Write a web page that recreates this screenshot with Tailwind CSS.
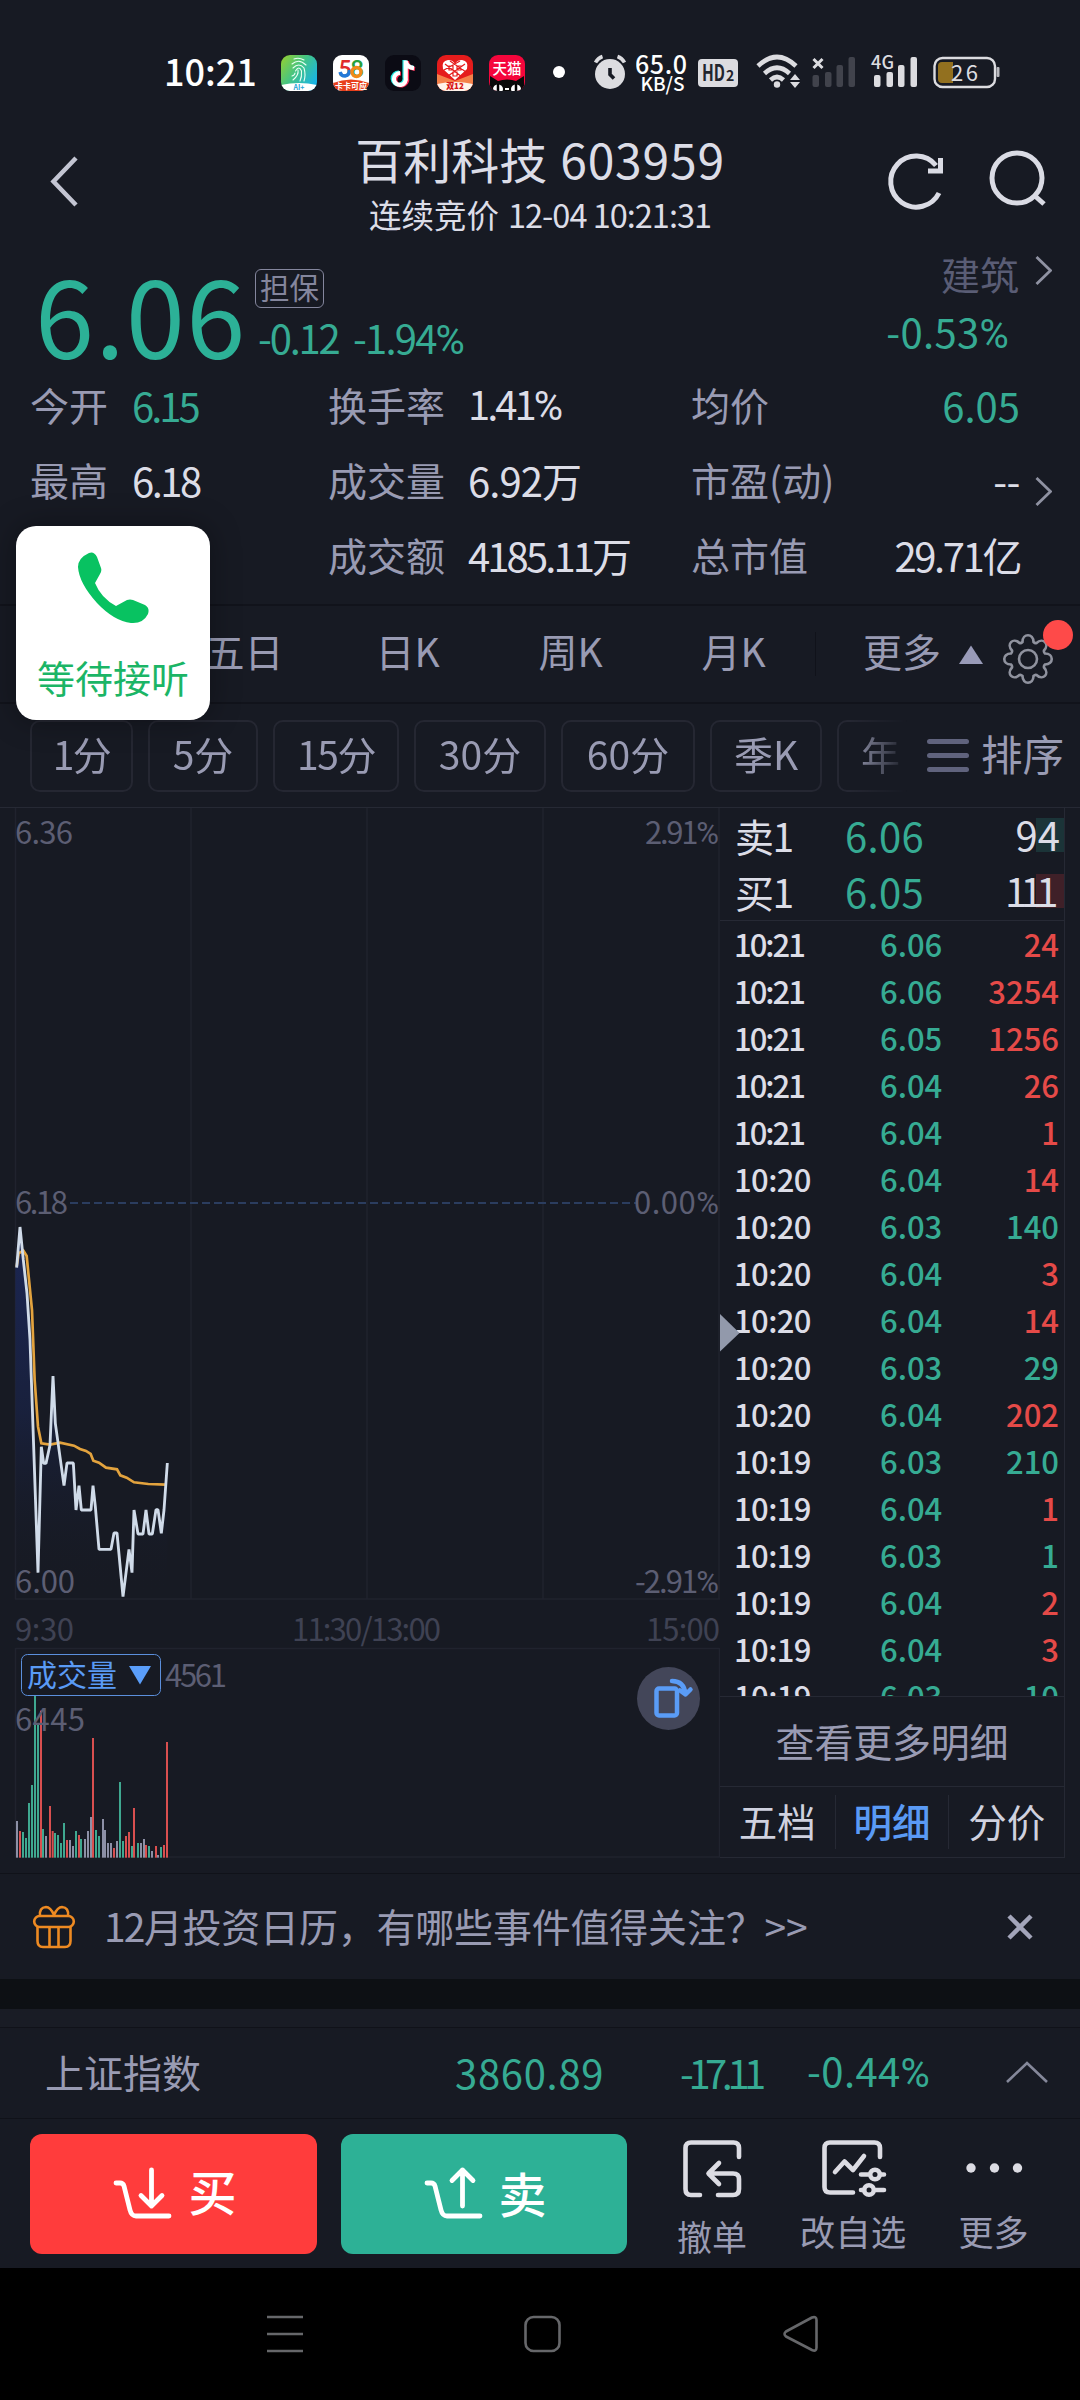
<!DOCTYPE html>
<html lang="zh-CN">
<head>
<meta charset="utf-8">
<title>百利科技 603959</title>
<script src="https://cdn.jsdelivr.net/npm/@tailwindcss/browser@4"></script>
</head>
<body class="bg-black">
<div class="relative flex h-[2400px] w-[1080px] flex-col overflow-hidden bg-[#171a23] font-['Noto_Sans_CJK_SC',sans-serif] leading-none text-[#dcdde7] whitespace-nowrap">

  <!-- status bar -->
  <div class="flex h-[136px] shrink-0 items-start pl-[164px] pt-[52px] text-white">
    <div class="w-[117px] text-[36px] font-medium leading-[36px]">10:21</div>
    <div class="flex gap-4 pt-[3px]">
      <svg class="size-9" viewBox="0 0 36 36">
        <defs><linearGradient id="fp" x1="0" y1="0" x2="1" y2="0.7"><stop offset="0" stop-color="#9ad02c"/><stop offset=".5" stop-color="#43c486"/><stop offset="1" stop-color="#18b4e6"/></linearGradient>
        <clipPath id="r36"><rect width="36" height="36" rx="9"/></clipPath></defs>
        <g clip-path="url(#r36)"><rect width="36" height="36" fill="url(#fp)"/><path d="M0 30Q18 26 36 30V36H0Z" fill="#fff"/></g>
        <g fill="none" stroke="#eafff4" stroke-width="1.1" stroke-linecap="round"><path d="M13 4Q18 2 23 5M11 9Q18 3 25 10M12 13Q18 7 23 13Q25 20 23 26M14.500 16Q18 10 20.500 16Q21 22 19 26M17 15Q18 20 12 25M14 18Q14 20 11 21"/></g>
        <text x="18" y="35" text-anchor="middle" font-size="7" font-weight="700" fill="#26a4d8">AI+</text>
      </svg>
      <svg class="size-9" viewBox="0 0 36 36">
        <g clip-path="url(#r36)"><rect width="36" height="36" fill="#fff"/><path d="M0 28Q18 21 36 28V36H0Z" fill="#e8401c"/></g>
        <g font-size="23" font-weight="700" font-family="Lato"><text x="5.500" y="22" fill="#e02b2b">5</text><text x="17.500" y="22" fill="#28a03c">8</text></g>
        <path d="M7 17Q8 21 12 21Q17 20 16 15" fill="none" stroke="#2178d8" stroke-width="3.4"/><circle cx="23.500" cy="17" r="4.500" fill="none" stroke="#f28a1a" stroke-width="3.400"/>
        <text x="18" y="33.500" text-anchor="middle" font-size="8" font-weight="700" fill="#fff">卡卡可应</text>
      </svg>
      <svg class="size-9" viewBox="0 0 36 36">
        <rect width="36" height="36" rx="9" fill="#0b0b14"/>
        <g fill="none" stroke-width="4.200"><path d="M19.500 5V22A6 6 0 1 1 14 17.500M19.500 6Q21 12 28 12.500" stroke="#25e8e2"/><path d="M22 6V23A6 6 0 1 1 16 18.500M22 7Q23 13 30 14" stroke="#fb2c55"/><path d="M20.700 5.500V22.500A6 6 0 1 1 15 18M20.700 6.500Q22 12.500 29 13.200" stroke="#fff"/></g>
      </svg>
      <svg class="size-9" viewBox="0 0 36 36">
        <g clip-path="url(#r36)"><rect width="36" height="36" fill="#e51c1c"/><path d="M0 19L18 26L36 19V36H0Z" fill="#f5814a"/><path d="M0 29Q18 25 36 29V36H0Z" fill="#fff3ea"/></g>
        <path d="M18 25L6 14Q4 6 11 5Q16 5 18 9Q20 5 25 5Q32 6 30 14Z" fill="#fff"/>
        <path d="M8 9L25 22M13 6L29 17M28 9L11 21M23 6L7 15M12 11h4v4h-4zM20 11h4v4h-4zM16 17h4v4h-4z" stroke="#e51c1c" stroke-width="1.200" fill="none"/>
        <text x="18" y="34" text-anchor="middle" font-size="8" font-weight="900" fill="#d81414">双12</text>
      </svg>
      <svg class="size-9" viewBox="0 0 36 36">
        <g clip-path="url(#r36)"><rect width="36" height="36" fill="#f5063c"/><path d="M1 36V21L9 26Q18 23 27 26L35 21V36Z" fill="#0a0a0a"/><ellipse cx="9" cy="34" rx="5" ry="4.500" fill="#fff"/><ellipse cx="27" cy="34" rx="5" ry="4.500" fill="#fff"/><path d="M9 29v7M27 29v7" stroke="#000" stroke-width="2.500"/><rect x="16" y="33" width="4" height="2" fill="#fff"/></g>
        <text x="18" y="19" text-anchor="middle" font-size="14.500" font-weight="500" fill="#fff">天猫</text>
      </svg>
    </div>
    <svg class="h-[60px] w-[111px] -mt-[12px]" viewBox="525 40 111 60">
      <circle cx="559" cy="72" r="6" fill="#fff"/>
      <circle cx="610" cy="74" r="15" fill="#dcdce0"/>
      <path d="M610 68v6.500l4 4" fill="none" stroke="#171a23" stroke-width="3.600"/>
      <path d="M595.500 62.500Q598 58 602.500 56.500M617.500 56.500Q622 58 624.500 62.500" fill="none" stroke="#dcdce0" stroke-width="3.600"/>
    </svg>
    <svg class="h-[60px] w-[62px] -mt-[12px]" viewBox="636 40 62 60">
      <g fill="#fff" font-weight="500"><text x="635" y="74" font-size="25" textLength="52">65.0</text><text x="640.500" y="90.500" font-size="19" textLength="44">KB/S</text></g>
    </svg>
    <svg class="h-[60px] w-[302px] -mt-[12px]" viewBox="698 40 302 60">
      <rect x="698" y="59" width="40" height="28" rx="4" fill="#dcdce0"/>
      <text x="702" y="81" font-size="22" font-weight="700" fill="#22252d" textLength="23" lengthAdjust="spacingAndGlyphs">HD</text><text x="726" y="81" font-size="14" font-weight="700" fill="#22252d">2</text>
      <g fill="none" stroke="#dcdce0" stroke-width="4.600"><path d="M758 66Q777 48 796 66"/><path d="M764.500 73.500Q777 62 789.500 73.500"/><path d="M770.500 80Q777 74 783.500 80"/></g>
      <circle cx="777" cy="84.500" r="3.200" fill="#dcdce0"/>
      <path d="M790 80l5-6 5 6zM790 82l5 6 5-6z" fill="#dcdce0"/>
      <path d="M813.500 59l9 9M822.500 59l-9 9" stroke="#dcdce0" stroke-width="3"/>
      <g fill="#41434c"><rect x="812.500" y="75" width="6.500" height="12" rx="2"/><rect x="825" y="72" width="6.500" height="15" rx="2"/><rect x="836.500" y="65" width="6.500" height="22" rx="2"/><rect x="848.500" y="57" width="6.500" height="30" rx="2"/></g>
      <text x="871" y="69" font-size="18" font-weight="500" fill="#dcdce0" textLength="23">4G</text>
      <g fill="#dcdce0"><rect x="874" y="75" width="6.500" height="12" rx="2"/><rect x="886.500" y="72" width="6.500" height="15" rx="2"/><rect x="898" y="65" width="6.500" height="22" rx="2"/><rect x="910.500" y="57" width="6.500" height="30" rx="2"/></g>
      <rect x="934.500" y="58" width="60.500" height="29" rx="8" fill="none" stroke="#dcdce0" stroke-width="2.400"/>
      <path d="M953 62V83H942Q938 83 938 79V66Q938 62 942 62Z" fill="#92701f"/>
      <rect x="996.500" y="67" width="3" height="10" rx="1" fill="#b9b9be"/>
      <text x="951" y="80.500" font-size="22" fill="#dcdce0" textLength="27">26</text>
    </svg>
  </div>

  <!-- header -->
  <div class="flex h-[114px] shrink-0 justify-between">
    <svg class="h-[114px] w-[230px]" viewBox="0 136 230 114"><path d="M76 158L53.500 181.500L76 205" fill="none" stroke="#c3c5d2" stroke-width="4.500"/></svg>
    <div class="flex flex-col items-center">
      <div class="-mt-[2px] text-[48px] leading-[48px]">百利科技<span class="ml-[13px] tracking-[0.800px]">603959</span></div>
      <div class="mt-[15px] text-[32.500px] leading-[33px]">连续竞价<span class="ml-[9px] tracking-[-1px]">12-04 10:21:31</span></div>
    </div>
    <svg class="h-[114px] w-[230px]" viewBox="850 136 230 114">
      <g fill="none" stroke="#dadbe4" stroke-width="5"><path d="M939 193A25.500 25.500 0 1 1 936 165.500"/><path d="M940.500 158V171H928"/><circle cx="1017" cy="178" r="25"/><path d="M1035 196L1044 204"/></g>
    </svg>
  </div>

  <!-- price -->
  <div class="flex h-[120px] shrink-0">
    <div class="mt-[11px] ml-[35px] w-[220px] text-[106px] leading-[105px] tracking-[1.400px] text-[#2cb197]">6.06</div>
    <div class="mt-[19px] flex flex-col items-start">
      <div class="flex h-[39px] w-[69px] items-center justify-center rounded-[6px] border border-[#84869d] pb-[3px] text-[29.500px] text-[#84869d]">担保</div>
      <div class="mt-[9px] ml-[3px] flex text-[40px] leading-[40px] text-[#36ab93]"><span class="w-[95px] tracking-[-2.200px]">-0.12</span><span class="tracking-[-1.800px]">-1.94<span class="font-['Roboto']">%</span></span></div>
    </div>
    <div class="ml-auto mr-[28px] flex flex-col items-end">
      <div class="flex items-start pt-[4px] text-[39px] leading-[39px] text-[#5a5d75]">建筑<svg class="ml-[16px] mt-[2px] h-[29px] w-[17px]" viewBox="0 0 17 29"><path d="M1.500 1L15.500 14.500L1.500 28" fill="none" stroke="#8f92a2" stroke-width="2.800"/></svg></div>
      <div class="mr-[43px] mt-[19px] text-[40px] leading-[39px] tracking-[0.300px] text-[#36ab93]">-0.53<span class="font-['Roboto']">%</span></div>
    </div>
  </div>

  <!-- stats -->
  <div class="flex h-[236px] shrink-0 border-b-2 border-[#11131b] text-[39px]">
    <div class="-mt-[3px] grid w-[328px] grid-cols-[102px_1fr] auto-rows-[75px] items-center pl-[30px] text-[#999bb3]">
      <span>今开</span><span class="text-[40px] tracking-[-3px] text-[#36ab93]">6.15</span>
      <span>最高</span><span class="text-[40px] tracking-[-2.500px] text-[#dcdde7]">6.18</span>
    </div>
    <div class="-mt-[3px] grid w-[363px] grid-cols-[140px_1fr] auto-rows-[75px] items-center text-[#999bb3]">
      <span>换手率</span><span class="text-[40px] tracking-[-3px] text-[#dcdde7]">1.41<span class="font-['Roboto']">%</span></span>
      <span>成交量</span><span class="text-[40px] tracking-[-0.900px] text-[#dcdde7]">6.92万</span>
      <span>成交额</span><span class="text-[40px] tracking-[-2.900px] text-[#dcdde7]">4185.11万</span>
    </div>
    <div class="-mt-[3px] grid w-[329px] grid-cols-[160px_1fr] auto-rows-[75px] items-center text-[#999bb3]">
      <span>均价</span><span class="text-right text-[40px] text-[#36ab93]">6.05</span>
      <span>市盈(动)</span><span class="text-right text-[40px] tracking-[-0.500px] text-[#dcdde7]">--</span>
      <span>总市值</span><span class="text-right text-[40px] tracking-[-2.400px] text-[#dcdde7]">29.71亿</span>
    </div>
    <svg class="ml-[15px] mt-[107px] h-[29px] w-[17px]" viewBox="0 0 17 29"><path d="M1.500 1L15.500 14.500L1.500 28" fill="none" stroke="#8f92a2" stroke-width="2.800"/></svg>
  </div>

  <!-- period tabs -->
  <div class="flex h-[98px] shrink-0 items-center border-b-2 border-[#11131b] text-[39px] text-[#999bb3]">
    <div class="grid w-[815px] grid-cols-5 pb-[8px] text-center"><span></span><span>五日</span><span>日K</span><span>周K</span><span>月K</span></div>
    <div class="h-[44px] w-px bg-[#10121a]"></div>
    <div class="ml-[47px] pb-[8px]">更多</div>
    <svg class="h-[96px] w-[139px]" viewBox="941 606 139 96">
      <path d="M959 664L971 645.500L983 664Z" fill="#999bb8"/>
      <g fill="none" stroke="#8f929e" stroke-width="2.600" transform="translate(1028 659)"><circle r="9"/>
      <path d="M-5.500 -17C-5.500 -26 5.500 -26 5.500 -17Q7 -15.500 8.500 -16C15 -22 22 -15 16 -8.500Q15.500 -7 17 -5.500C26 -5.500 26 5.500 17 5.500Q15.500 7 16 8.500C22 15 15 22 8.500 16Q7 15.500 5.500 17C5.500 26 -5.500 26 -5.500 17Q-7 15.500 -8.500 16C-15 22 -22 15 -16 8.500Q-15.500 7 -17 5.500C-26 5.500 -26 -5.500 -17 -5.500Q-15.500 -7 -16 -8.500C-22 -15 -15 -22 -8.500 -16Q-7 -15.500 -5.500 -17Z"/></g>
      <circle cx="1058" cy="635" r="15" fill="#fe4a49"/>
    </svg>
  </div>

  <!-- minute chips -->
  <div class="flex h-[104px] shrink-0 items-center border-b border-[#262934] pl-[30px] text-[39px] text-[#999bb3]">
    <div class="flex w-[877px] gap-[15px] overflow-hidden [mask-image:linear-gradient(to_right,black_93.500%,transparent_100%)]">
      <div class="flex h-[72px] w-[103px] shrink-0 items-center justify-center rounded-[10px] border-2 border-[#252732] pb-[4px] tracking-[-1.500px]">1分</div>
      <div class="flex h-[72px] w-[110px] shrink-0 items-center justify-center rounded-[10px] border-2 border-[#252732] pb-[4px]">5分</div>
      <div class="flex h-[72px] w-[126px] shrink-0 items-center justify-center rounded-[10px] border-2 border-[#252732] pb-[4px] tracking-[-1.500px]">15分</div>
      <div class="flex h-[72px] w-[132px] shrink-0 items-center justify-center rounded-[10px] border-2 border-[#252732] pb-[4px]">30分</div>
      <div class="flex h-[72px] w-[134px] shrink-0 items-center justify-center rounded-[10px] border-2 border-[#252732] pb-[4px]">60分</div>
      <div class="flex h-[72px] w-[112px] shrink-0 items-center justify-center rounded-[10px] border-2 border-[#252732] pb-[4px]">季K</div>
      <div class="flex h-[72px] w-[112px] shrink-0 items-center rounded-[10px] border-2 border-[#252732] pb-[4px] pl-[22px]">年</div>
    </div>
    <div class="ml-[20px] flex h-[33px] w-[42px] flex-col justify-between">
      <div class="h-[5px] rounded-full bg-[#60637d]"></div><div class="h-[5px] rounded-full bg-[#60637d]"></div><div class="h-[5px] rounded-full bg-[#60637d]"></div>
    </div>
    <div class="ml-[12px] pb-[3px] text-[41.500px]">排序</div>
  </div>

  <!-- chart and trades -->
  <div class="flex h-[1050px] shrink-0">
    <svg class="h-[1050px] w-[720px] shrink-0" viewBox="0 808 720 1050">
      <defs><linearGradient id="area" gradientUnits="userSpaceOnUse" x1="0" y1="80" x2="0" y2="1190"><stop offset="0" stop-color="#1b2654"/><stop offset=".5" stop-color="#19213f" stop-opacity=".9"/><stop offset="1" stop-color="#171a23" stop-opacity="0"/></linearGradient></defs>
      <g fill="none" stroke="#20232e" stroke-width="1.500"><path d="M15.500 808V1599M191 808V1599M367 808V1599M543 808V1599M719 808V1599M15 1599H720M15.500 1648.500H719.500M15.500 1648V1857H719.500V1648"/></g>
      <path d="M70 1203H636" stroke="#2b3d5f" stroke-width="2" stroke-dasharray="8 4"/>
      <g transform="translate(0 1200) scale(.33333)" fill="none">
        <path d="M50 203L60 81L70 180L81 280L90 420L114 1118L124 740L131 790L138 790L150 735L159 528L166 670L192 857L201 789L220 789L228 930L237 857L244 930L273 930L279 857L286 920L297 1048L333 1048L342 999L351 999L369 1190L387 1048L396 1118L402 930L414 1002L429 1002L438 930L447 1002L457 1002L468 929L474 929L484 1000L492 930L502 789V1190H46V203Z" fill="url(#area)"/>
        <path d="M50 200L56 160L70 152L80 168L96 330L104 540L114 680L124 730L150 734L180 728L222 737L240 747L258 753L272 762L280 782L297 788L318 803L351 808L361 826L380 833L402 847L445 852L497 854" stroke="#e3a33e" stroke-width="8"/>
        <path d="M50 203L60 81L70 180L81 280L90 420L114 1118L124 740L131 790L138 790L150 735L159 528L166 670L192 857L201 789L220 789L228 930L237 857L244 930L273 930L279 857L286 920L297 1048L333 1048L342 999L351 999L369 1190L387 1048L396 1118L402 930L414 1002L429 1002L438 930L447 1002L457 1002L468 929L474 929L484 1000L492 930L502 789" stroke="#d0dbe9" stroke-width="8.500" stroke-linejoin="bevel"/>
      </g>
      <g id="bars"></g>
      <g font-size="31" fill="#5c5e73">
        <text x="15" y="844" textLength="58">6.36</text><text x="645" y="844" textLength="74">2.91<tspan font-family="Roboto">%</tspan></text>
        <text x="15" y="1214" textLength="53">6.18</text><text x="634" y="1214" textLength="85">0.00<tspan font-family="Roboto">%</tspan></text>
        <text x="15" y="1593" textLength="60">6.00</text><text x="635" y="1593" textLength="84">-2.91<tspan font-family="Roboto">%</tspan></text>
        <text x="165" y="1687" textLength="62">4561</text><text x="15" y="1731" textLength="70">6445</text>
      </g>
      <g font-size="31" fill="#3f4253">
        <text x="15" y="1641" textLength="59">9:30</text><text x="292" y="1641" textLength="149">11:30/13:00</text><text x="646" y="1641" textLength="74">15:00</text>
      </g>
      <rect x="21.500" y="1654.500" width="139" height="41" rx="6" fill="#171a23" stroke="#5b8fdc"/>
      <text x="27" y="1686" font-size="30" fill="#5a9af5" textLength="90">成交量</text>
      <path d="M129 1666H151L140 1684.500Z" fill="#5a9df9"/>
      <circle cx="668.500" cy="1698.500" r="31.500" fill="#434659"/>
      <g fill="none" stroke="#5a9cf6" stroke-width="4.500" stroke-linecap="round" stroke-linejoin="round"><rect x="656.500" y="1688.500" width="20.500" height="27" rx="2.500"/><path d="M672 1681Q684 1681 685.500 1694M680 1690.500L685.500 1694.500L690.500 1689.500"/></g>
    </svg>

    <div class="relative flex h-[1050px] w-[345px] flex-col border-b border-r border-[#262934]">
      <div class="flex h-[113px] flex-col border-b border-[#262934] text-[40px]">
        <div class="flex h-[56px] items-center pl-[15px] pb-[2px]"><span class="w-[110px] text-[39px] tracking-[-1.500px]">卖1</span><span class="tracking-[0.300px] text-[#36ab93]">6.06</span><span class="ml-auto flex h-[34px] items-center bg-[linear-gradient(to_left,#1b3438_28px,transparent_28px)] pb-[3px] pr-[4px]">94</span></div>
        <div class="flex h-[56px] items-center pl-[15px] pb-[2px]"><span class="w-[110px] text-[39px] tracking-[-1.500px]">买1</span><span class="tracking-[0.300px] text-[#36ab93]">6.05</span><span class="ml-auto flex h-[34px] items-center bg-[linear-gradient(to_left,#3f2028_28px,transparent_28px)] pb-[3px] pr-[12px] tracking-[-6.500px]">111</span></div>
      </div>
      <div id="trades" class="h-[775px] overflow-hidden pt-px text-[31px] font-medium"></div>
      <div class="flex h-[91px] items-center justify-center border-y border-[#262934] pb-[3px] text-[39px] tracking-[-0.200px] text-[#999bb3]">查看更多明细</div>
      <div class="grid flex-1 grid-cols-3 items-center text-center text-[38.500px] font-medium text-[#cfd1df]">
        <span class="pb-[3px] font-normal">五档</span><span class="flex h-[54px] items-center justify-center border-x border-[#262934] pb-[3px] text-[#5a9af5]">明细</span><span class="pb-[3px] font-normal">分价</span>
      </div>
      <svg class="absolute left-0 top-[506px] h-[38px] w-[20px]" viewBox="0 0 20 38"><path d="M0 0L19.500 19L0 37.500Z" fill="#9299ab"/></svg>
    </div>
  </div>

  <!-- notice -->
  <div class="flex h-[121px] shrink-0 flex-col pt-[15px]">
    <div class="flex flex-1 items-center border-t border-[#101219] pl-[32px] text-[39px] text-[#999bb3]">
      <svg class="h-[44px] w-[44px]" viewBox="0 0 44 44"><g fill="none" stroke="#ee8a22" stroke-width="2.600" stroke-linejoin="round"><rect x="2.200" y="11" width="39.600" height="11" rx="5.500"/><path d="M5.500 22V36Q5.500 42 11 42H33Q38.500 42 38.500 36V22M17.500 22V42M26.500 22V42M8 11Q7 2.500 14 2Q18.500 2 22 10Q25.500 2 30 2Q37 2.500 36 11"/></g></svg>
      <div class="ml-[28px] pb-[3px] tracking-[-0.200px]"><span class="tracking-[-1.800px]">12</span>月投资日历，有哪些事件值得关注？&gt;&gt;</div>
      <svg class="ml-auto mr-[47px] size-[26px]" viewBox="0 0 26 26"><path d="M2 2L24 24M24 2L2 24" stroke="#a3a5ba" stroke-width="4.500"/></svg>
    </div>
  </div>
  <div class="h-[30px] shrink-0 bg-[#0d1014]"></div>
  <div class="h-[18px] shrink-0 bg-[#191c25]"></div>

  <!-- index -->
  <div class="flex h-[92px] shrink-0 items-center border-y border-[#101219] pl-[45px] pb-[3px] text-[39px] text-[#36ab93]">
    <span class="w-[410px] text-[#999bb3]">上证指数</span><span class="w-[225px] text-[40px] tracking-[0.700px]">3860.89</span><span class="w-[127px] text-[40px] tracking-[-5.500px]">-17.11</span><span class="text-[40px] tracking-[0.400px]">-0.44<span class="font-['Roboto']">%</span></span>
    <svg class="ml-auto mr-[31px] h-[24px] w-[44px]" viewBox="0 0 44 24"><path d="M2 22L22 3L42 22" fill="none" stroke="#85889a" stroke-width="2.600"/></svg>
  </div>

  <!-- actions -->
  <div class="flex h-[149px] shrink-0 pl-[30px] pt-[15px]">
    <div class="flex h-[120px] w-[287px] items-center justify-center rounded-[12px] bg-[#ff3c3c] pb-[3px] pl-[3px] text-[48px] font-medium text-white">
      <svg class="mr-[15px] h-[54px] w-[60px]" viewBox="0 0 60 54"><g fill="none" stroke="#fff" stroke-width="4.800" stroke-linecap="round" stroke-linejoin="round"><path d="M3 17H7Q10 17 11 20L17 44Q18.500 50 23 50H56M38.500 4V40M28 29.500L38.500 40L49 29.500"/></g></svg><span class="pb-[6px]">买</span>
    </div>
    <div class="ml-[24px] flex h-[120px] w-[286px] items-center justify-center rounded-[12px] bg-[#2db196] pb-[2px] pl-[3px] text-[48px] font-medium text-white">
      <svg class="mr-[14px] h-[54px] w-[60px]" viewBox="0 0 60 54"><g fill="none" stroke="#fff" stroke-width="4.800" stroke-linecap="round" stroke-linejoin="round"><path d="M3 17H7Q10 17 11 20L17 44Q18.500 50 23 50H56M38.500 40V4M28 14.500L38.500 4L49 14.500"/></g></svg><span class="pb-[2px]">卖</span>
    </div>
    <div class="ml-[50px] flex w-[70px] flex-col items-center text-[35px] text-[#999bb3]">
      <svg class="mt-[5px] h-[60px] w-[60px]" viewBox="0 0 60 60"><g fill="none" stroke="#dcdce3" stroke-width="4.600" stroke-linecap="round" stroke-linejoin="round"><path d="M57 18V9Q57 3.500 51.500 3.500H9Q3.500 3.500 3.500 9V50Q3.500 56 9 56H18M36 56H51Q57 56 57 50V40Q57 34.500 51 34.500H27M37 24L26.500 34.500L37 45"/></g></svg>
      <span class="mt-[19px]">撤单</span>
    </div>
    <div class="ml-[54px] flex w-[106px] flex-col items-center text-[35.500px] text-[#999bb3]">
      <svg class="mt-[5px] h-[60px] w-[66px]" viewBox="0 0 66 60"><g fill="none" stroke="#dcdce3" stroke-width="4.600" stroke-linecap="round" stroke-linejoin="round"><path d="M59 18V9Q59 3.500 53.500 3.500H9Q3.500 3.500 3.500 9V48Q3.500 53.500 9 53.500H32M14 33L23.500 22.500L32 31L43 17M40 35.500H47M60 35.500H63M40 51H43M55 51H63"/><circle cx="54" cy="35.500" r="4.800"/><circle cx="48" cy="51" r="4.800"/></g></svg>
      <span class="mt-[14px] pr-[2px]">改自选</span>
    </div>
    <div class="ml-[53px] flex w-[70px] flex-col items-center text-[35px] text-[#999bb3]">
      <svg class="mt-[5px] h-[60px] w-[60px]" viewBox="0 0 60 60"><g fill="#dcdce3"><circle cx="6" cy="29" r="4.700"/><circle cx="29.500" cy="29" r="4.700"/><circle cx="52.500" cy="29" r="4.700"/></g></svg>
      <span class="mt-[14px] pr-[3px]">更多</span>
    </div>
  </div>

  <!-- system navigation -->
  <div class="h-[132px] shrink-0 bg-black">
    <svg class="h-[132px] w-[1080px]" viewBox="0 2268 1080 132"><g fill="none" stroke="#66676a" stroke-width="2.600" stroke-linejoin="round"><path d="M267 2317H303M267 2334H303M267 2351H303"/><rect x="525.500" y="2317" width="34" height="34" rx="8"/><path d="M786 2331.500L812 2317.500Q816.500 2316 816.500 2320V2347.500Q816.500 2352 812 2350L786 2336.500Q783 2334 786 2331.500Z"/></g></svg>
  </div>

  <!-- floating call bubble -->
  <div class="absolute left-[16px] top-[526px] flex h-[194px] w-[194px] flex-col items-center rounded-[20px] bg-white shadow-[0_0_30px_rgba(0,0,0,0.35)]">
    <svg class="mt-[26px] h-[72px] w-[72px]" viewBox="0 0 72 72"><path d="M12 1Q17 -1 20 5L24 16Q25 19 23 22L18 31Q24 46 39 54L50 48Q53 47 56 48L68 53Q73 56 71 62Q66 72 54 71Q37 69 20 51Q2 31 1 15Q1 6 12 1Z" fill="#08c261"/></svg>
    <span class="mt-[34px] text-[38px] text-[#1bb566]">等待接听</span>
  </div>
</div>

<script>
  const trades = [
    ['10:21','6.06','24',1],['10:21','6.06','3254',1],['10:21','6.05','1256',1],['10:21','6.04','26',1],['10:21','6.04','1',1],
    ['10:20','6.04','14',1],['10:20','6.03','140',0],['10:20','6.04','3',1],['10:20','6.04','14',1],['10:20','6.03','29',0],['10:20','6.04','202',1],
    ['10:19','6.03','210',0],['10:19','6.04','1',1],['10:19','6.03','1',0],['10:19','6.04','2',1],['10:19','6.04','3',1],['10:19','6.03','10',0]
  ];
  document.getElementById('trades').innerHTML = trades.map(([t, p, v, up]) =>
    `<div class="flex h-[47px] items-center pl-[14px] pr-[5px] pb-[4px]"><span class="${t === '10:21' ? 'tracking-[-2px]' : 'tracking-[-0.600px]'} w-[146px]">${t}</span><span class="text-[#36ab93]">${p}</span><span class="ml-auto ${up ? 'text-[#e54a48]' : 'text-[#36ab93]'}">${v}</span></div>`).join('');

  // [x, top, colour] at three units per pixel
  const color = {r: '#d94f4f', g: '#3fa890', n: '#8d90a6'};
  const bars = [[51,783,'n'],[60,813,'r'],[69,816,'g'],[78,834,'g'],[87,729,'g'],[96,675,'g'],[105,407,'g'],[114,490,'g'],[123,452,'r'],[129,807,'g'],[138,828,'n'],[150,738,'r'],[158,813,'r'],[165,819,'g'],[174,825,'g'],[183,849,'g'],[192,789,'g'],[201,840,'r'],[210,840,'n'],[219,858,'n'],[228,813,'g'],[237,825,'r'],[243,837,'g'],[255,837,'n'],[264,813,'n'],[273,771,'n'],[279,534,'r'],[288,810,'g'],[297,828,'g'],[309,777,'n'],[315,810,'n'],[324,849,'n'],[333,849,'n'],[342,864,'r'],[351,843,'n'],[360,666,'g'],[369,843,'g'],[378,828,'r'],[387,816,'r'],[396,858,'g'],[402,744,'r'],[414,849,'g'],[423,849,'n'],[432,837,'n'],[438,855,'r'],[447,858,'g'],[456,873,'n'],[468,858,'r'],[474,885,'n'],[483,861,'g'],[492,855,'r'],[501,546,'r']];
  document.getElementById('bars').innerHTML = bars.map(([x, y, c]) =>
    `<rect x="${x / 3 - 1}" y="${1560 + y / 3}" width="2" height="${(893 - y) / 3}" fill="${color[c]}"/>`).join('');
</script>
</body>
</html>
